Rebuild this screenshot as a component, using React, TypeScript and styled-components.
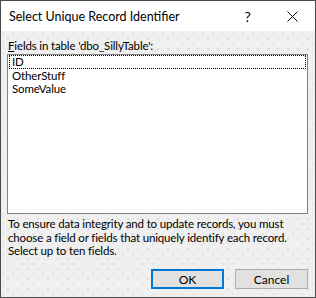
import React from "react";
import styled, { createGlobalStyle } from "styled-components";

const Global = createGlobalStyle`
  html, body { margin: 0; padding: 0; background: #ffffff; }
  * { box-sizing: border-box; }
`;

const Window = styled.div`
  width: 316px;
  height: 298px;
  border: 1px solid #4a4a4a;
  display: flex;
  flex-direction: column;
  font-family: Lato, "Noto Sans", sans-serif;
  font-size: 11.5px;
  letter-spacing: -0.15px;
  color: #000;
  overflow: hidden;
  white-space: nowrap;
`;

const TitleBar = styled.div`
  height: 30px;
  background: #ffffff;
  display: flex;
  align-items: center;
  padding-left: 8px;
  flex-shrink: 0;
`;

const Title = styled.div`
  flex: 1;
  font-size: 12.5px;
  letter-spacing: 0;
`;

const TitleButton = styled.div<{ $w: number }>`
  width: ${(p) => p.$w}px;
  height: 30px;
  display: flex;
  align-items: center;
  justify-content: center;
  font-size: 14px;
`;

const Body = styled.div`
  flex: 1;
  background-color: #f0f0f0;
  background-image: radial-gradient(circle, #dedede 0.7px, transparent 1px),
    radial-gradient(circle, #e4e4e4 0.7px, transparent 1px);
  background-size: 10px 10px, 10px 10px;
  background-position: 2px 3px, 7px 8px;
  padding: 7px 7px 0 6px;
  display: flex;
  flex-direction: column;
`;

const Label = styled.div`
  line-height: 16px;
  height: 16px;
  padding-left: 1px;
`;

const Underline = styled.span`
  text-decoration: underline;
`;

const ListBox = styled.div`
  height: 160px;
  flex-shrink: 0;
  background: #ffffff;
  border: 1px solid #828282;
  padding: 0 1px;
  display: flex;
  flex-direction: column;
`;

const Item = styled.div<{ $focused?: boolean }>`
  height: 13.5px;
  flex-shrink: 0;
  display: flex;
  align-items: center;
  padding-left: 2px;
  border: 1px dotted ${(p) => (p.$focused ? "#000" : "transparent")};
`;

const Help = styled.div`
  margin-top: 3px;
  padding-left: 1px;
  line-height: 13.5px;
  height: 41px;
  flex-shrink: 0;
`;

const Buttons = styled.div`
  margin-top: 11px;
  display: flex;
  justify-content: flex-end;
  gap: 11px;
`;

const Button = styled.div<{ $default?: boolean }>`
  width: 73px;
  height: 20px;
  background: #e1e1e1;
  border: ${(p) => (p.$default ? "2px solid #0078d7" : "1px solid #adadad")};
  display: flex;
  align-items: center;
  justify-content: center;
  font-size: 12px;
  letter-spacing: 0;
`;

export default function App() {
  return (
    <>
      <Global />
      <Window>
        <TitleBar>
          <Title>Select Unique Record Identifier</Title>
          <TitleButton $w={43}>?</TitleButton>
          <TitleButton $w={46}>
            <svg width="11" height="11" viewBox="0 0 11 11">
              <path d="M0.5 0.5 L10.5 10.5 M10.5 0.5 L0.5 10.5" stroke="#000" strokeWidth="1" />
            </svg>
          </TitleButton>
        </TitleBar>
        <Body>
          <Label>
            <Underline>F</Underline>ields in table 'dbo_SillyTable':
          </Label>
          <ListBox>
            <Item $focused>ID</Item>
            <Item>OtherStuff</Item>
            <Item>SomeValue</Item>
          </ListBox>
          <Help>
            To ensure data integrity and to update records, you must
            <br />
            choose a field or fields that uniquely identify each record.
            <br />
            Select up to ten fields.
          </Help>
          <Buttons>
            <Button $default>OK</Button>
            <Button>Cancel</Button>
          </Buttons>
        </Body>
      </Window>
    </>
  );
}
